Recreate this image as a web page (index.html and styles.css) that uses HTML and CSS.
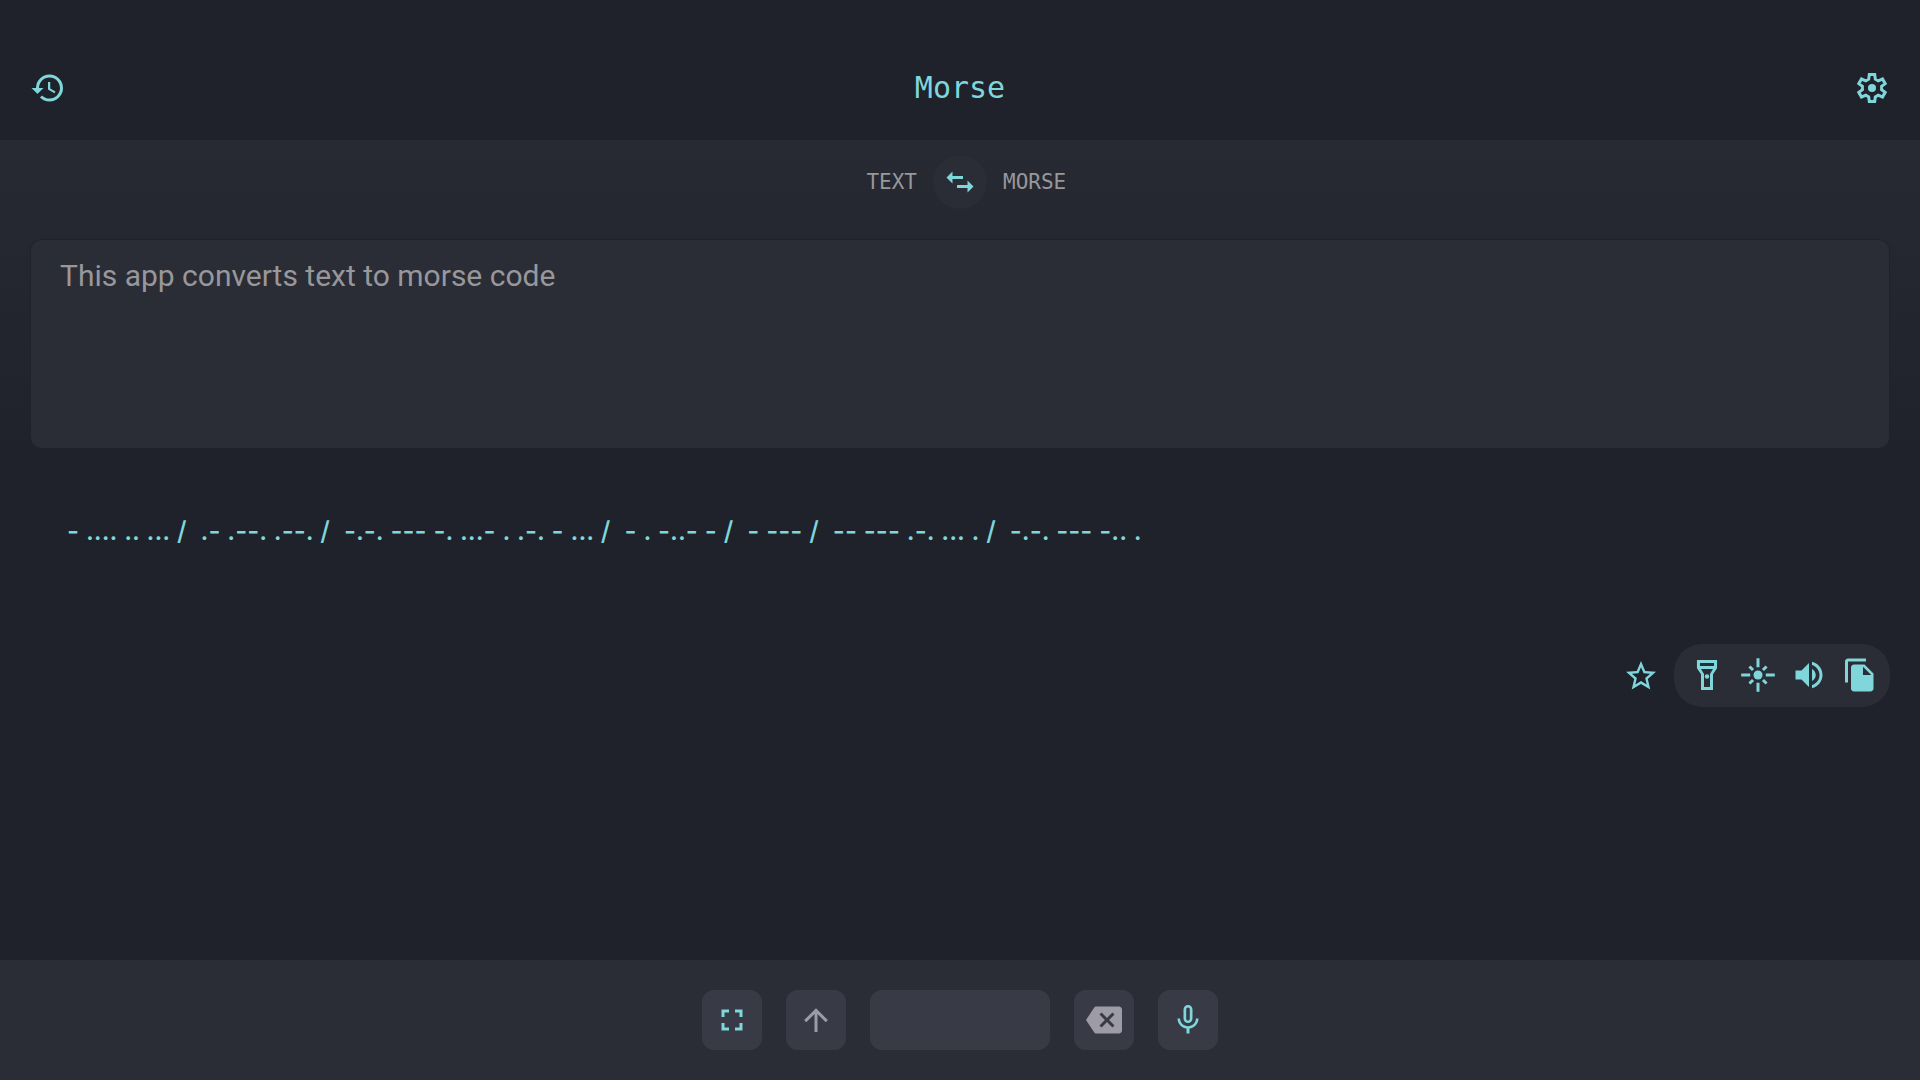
FILE: index.html
```html
<!DOCTYPE html>
<html lang="en">
<head>
<meta charset="utf-8">
<meta name="viewport" content="width=device-width, initial-scale=1">
<title>Morse</title>
<link rel="stylesheet" href="styles.css">
</head>
<body>
<header class="topbar">
  <button class="icon-button" type="button" aria-label="History">
    <svg class="icon" viewBox="0 0 24 24"><path d="M13 3a9 9 0 0 0-9 9H1l3.89 3.89.07.14L9 12H6c0-3.87 3.13-7 7-7s7 3.13 7 7-3.13 7-7 7c-1.93 0-3.68-.79-4.94-2.06l-1.42 1.42A8.95 8.95 0 0 0 13 21a9 9 0 0 0 0-18zm-1 5v5l4.28 2.54.72-1.21-3.5-2.08V8H12z"/></svg>
  </button>
  <h1 class="title">Morse</h1>
  <button class="icon-button" type="button" aria-label="Settings">
    <svg class="icon" viewBox="0 0 24 24"><path class="line" d="M10.2 3h3.6l.4 3.1 1.9 1.1 2.9-1.2 1.8 3.1-2.4 1.8v2.2l2.4 1.8-1.8 3.1-2.9-1.2-1.9 1.1-.4 3.1h-3.6l-.4-3.1-1.9-1.1L5 18l-1.8-3.1 2.4-1.8v-2.2L3.2 9.1 5 6l2.9 1.2 1.9-1.1z"/><circle cx="12" cy="12" r="2.7"/></svg>
  </button>
</header>
<main class="content">
  <section class="converter">
    <div class="direction">
      <span class="direction-from">TEXT</span>
      <button class="swap" type="button" aria-label="Swap direction">
        <svg class="icon" viewBox="0 0 24 24"><path d="M3 9l4-4v3h7v2H7v3zM21 15l-4 4v-3h-7v-2h7v-3z"/></svg>
      </button>
      <span class="direction-to">MORSE</span>
    </div>
    <textarea class="source" aria-label="Text to convert">This app converts text to morse code</textarea>
  </section>
  <output class="result"><span class="word">- .... .. ... /</span> <span class="word">.- .--. .--. /</span> <span class="word">-.-. --- -. ...- . .-. - ... /</span> <span class="word">- . -..- - /</span> <span class="word">- --- /</span> <span class="word">-- --- .-. ... . /</span> <span class="word">-.-. --- -.. .</span></output>
  <div class="actions">
    <button class="icon-button" type="button" aria-label="Favourite">
      <svg class="icon" viewBox="0 0 24 24"><path d="M22 9.24l-7.19-.62L12 2 9.19 8.63 2 9.24l5.46 4.73L5.82 21 12 17.27 18.18 21l-1.63-7.03L22 9.24zM12 15.4l-3.76 2.27 1-4.28-3.32-2.88 4.38-.38L12 6.1l1.71 4.04 4.38.38-3.32 2.88 1 4.28L12 15.4z"/></svg>
    </button>
    <div class="pill">
      <button class="icon-button" type="button" aria-label="Flashlight">
        <svg class="icon" viewBox="0 0 24 24"><path fill-rule="evenodd" d="M5.3 2H18.7V7.5L16 11.5V22H8V11.5L5.3 7.5zM7.3 4V6H16.7V4zM8 8L10 11.3V20H14V11.3L16 8z"/><circle cx="12" cy="13" r="1.5"/></svg>
      </button>
      <button class="icon-button" type="button" aria-label="Blink screen">
        <svg class="icon" viewBox="0 0 24 24"><circle cx="12" cy="12" r="3"/><path class="line" d="M12 .8v6M12 17.2v6M.8 12h6M17.2 12h6M8.7 8.7L6.3 6.3M15.3 8.7l2.4-2.4M8.7 15.3l-2.4 2.4M15.3 15.3l2.4 2.4"/></svg>
      </button>
      <button class="icon-button" type="button" aria-label="Play sound">
        <svg class="icon" viewBox="0 0 24 24"><path d="M3 9v6h4l5 5V4L7 9H3zm13.5 3c0-1.77-1.02-3.29-2.5-4.03v8.05c1.48-.73 2.5-2.25 2.5-4.02zM14 3.23v2.06c2.89.86 5 3.54 5 6.71s-2.11 5.85-5 6.71v2.06c4.01-.91 7-4.49 7-8.77s-2.99-7.86-7-8.77z"/></svg>
      </button>
      <button class="icon-button" type="button" aria-label="Copy">
        <svg class="icon" viewBox="0 0 24 24"><path d="M16 1H4c-1.1 0-2 .9-2 2v14h2V3h12V1zm-1 4l6 6v10c0 1.1-.9 2-2 2H7.99C6.89 23 6 22.1 6 21V7c0-1.1.89-2 1.99-2h7zm-1 7h5.5L14 6.5V12z"/></svg>
      </button>
    </div>
  </div>
</main>
<footer class="keybar">
  <button class="key" type="button" aria-label="Full screen">
    <svg class="icon" viewBox="0 0 24 24"><path d="M7 14H5v5h5v-2H7v-3zM5 10h2V7h3V5H5v5zm12 7h-3v2h5v-5h-2v3zM14 5v2h3v3h2V5h-5z"/></svg>
  </button>
  <button class="key key-muted" type="button" aria-label="Shift">
    <svg class="icon" viewBox="0 0 24 24"><path d="M13 20h-2V8l-5.5 5.5-1.42-1.42L12 4.16l7.92 7.92-1.42 1.42L13 8z"/></svg>
  </button>
  <button class="key key-space" type="button" aria-label="Space"></button>
  <button class="key key-muted" type="button" aria-label="Backspace">
    <svg class="icon" viewBox="0 0 24 24"><path d="M22 3H7c-.69 0-1.23.35-1.59.88L0 12l5.41 8.11c.36.53.9.89 1.59.89h15c1.1 0 2-.9 2-2V5c0-1.1-.9-2-2-2zm-3 12.59L17.59 17 14 13.41 10.41 17 9 15.59 12.59 12 9 8.41 10.41 7 14 10.59 17.59 7 19 8.41 15.41 12 19 15.59z"/></svg>
  </button>
  <button class="key" type="button" aria-label="Voice input">
    <svg class="icon" viewBox="0 0 24 24"><path d="M12 14c1.66 0 2.99-1.34 2.99-3L15 5c0-1.66-1.34-3-3-3S9 3.34 9 5v6c0 1.66 1.34 3 3 3zm-1.2-9.1c0-.66.54-1.2 1.2-1.2.66 0 1.2.54 1.2 1.2l-.01 6.2c0 .66-.53 1.2-1.19 1.2-.66 0-1.2-.54-1.2-1.2V4.9zm6.5 6.1c0 3-2.54 5.1-5.3 5.1S6.7 14 6.7 11H5c0 3.41 2.72 6.23 6 6.72V21h2v-3.28c3.28-.48 6-3.3 6-6.72h-1.7z"/></svg>
  </button>
</footer>
</body>
</html>
```
FILE: styles.css
```css
:root {
  --bg: #1f222a;
  --panel: #2a2d35;
  --key: #383a46;
  --accent: #7fd6db;
  --muted: #98979b;
}

* {
  box-sizing: border-box;
}

body {
  display: flex;
  flex-direction: column;
  min-height: 100vh;
  margin: 0;
  background: var(--bg);
  color: var(--accent);
  font-family: Roboto, "Liberation Sans", sans-serif;
}

button {
  padding: 0;
  border: 0;
  background: none;
  color: inherit;
  cursor: pointer;
}

.icon {
  display: block;
  width: 36px;
  height: 36px;
  fill: currentColor;
}

.line {
  fill: none;
  stroke: currentColor;
  stroke-width: 2;
}

.topbar {
  display: flex;
  align-items: center;
  justify-content: space-between;
  height: 140px;
  padding: 36px 30px 0;
}

.title {
  margin: 0;
  font: 400 30px/36px "DejaVu Sans Mono", monospace;
}

.content {
  flex: 1;
}

.converter {
  padding: 15px 30px;
  background: linear-gradient(#272a32, var(--bg));
}

.direction {
  display: grid;
  grid-template-columns: 1fr auto 1fr;
  align-items: center;
  gap: 16px;
  margin-bottom: 30px;
  color: var(--muted);
  font: 400 21px/24px "DejaVu Sans Mono", monospace;
}

.direction-from {
  text-align: right;
}

.swap {
  display: grid;
  place-items: center;
  width: 54px;
  height: 54px;
  border-radius: 50%;
  background: var(--panel);
  color: var(--accent);
}

.source {
  display: block;
  width: 100%;
  height: 210px;
  padding: 18px 29px;
  border: 1px solid var(--bg);
  border-radius: 12px;
  outline: 0;
  background: var(--panel);
  color: var(--muted);
  font: 400 30px/36px Roboto, sans-serif;
  resize: none;
}

.result {
  display: flex;
  flex-wrap: wrap;
  gap: 14px;
  min-height: 180px;
  padding: 49px 67px;
  font: 500 26px/36px Inter, sans-serif;
  font-feature-settings: "calt" 0;
}

.actions {
  display: flex;
  align-items: center;
  justify-content: flex-end;
  gap: 15px;
  padding: 0 30px;
}

.pill {
  display: flex;
  gap: 15px;
  padding: 13px 12px 14px 15px;
  border-radius: 28px;
  background: var(--panel);
}

.keybar {
  display: flex;
  justify-content: center;
  gap: 24px;
  padding: 30px;
  background: var(--panel);
}

.key {
  display: grid;
  place-items: center;
  width: 60px;
  height: 60px;
  border-radius: 12px;
  background: var(--key);
}

.key-muted {
  color: #9d9ca6;
}

.key-space {
  width: 180px;
}
```
